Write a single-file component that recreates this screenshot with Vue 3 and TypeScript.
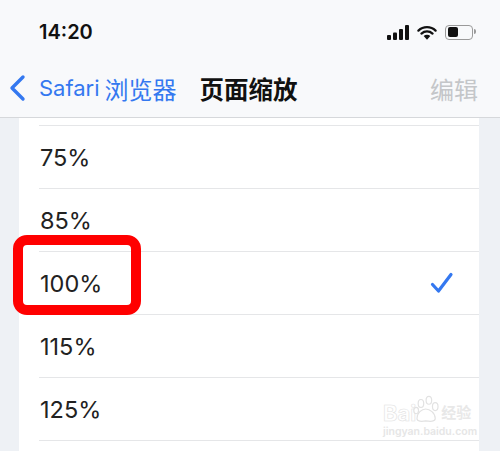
<script setup lang="ts">
const levels = [
  { label: "75%", active: false },
  { label: "85%", active: false },
  { label: "100%", active: true },
  { label: "115%", active: false },
  { label: "125%", active: false },
];
</script>

<template>
  <main class="screen">
    <header class="head">
      <div class="status">
        <span class="status__time">14:20</span>
        <div class="status__icons">
          <svg width="22" height="15" viewBox="0 0 22 15">
            <rect x="0" y="10" width="4" height="5" rx="1" />
            <rect x="6" y="7.5" width="4" height="7.5" rx="1" />
            <rect x="12" y="4" width="4" height="11" rx="1" />
            <rect x="18" y="0" width="4" height="15" rx="1" />
          </svg>
          <svg width="20" height="15" viewBox="0 0 21 15">
            <path d="M1.5 5.5a13 13 0 0 1 18 0M4.7 8.6a8.5 8.5 0 0 1 11.6 0" fill="none" stroke="#111" stroke-width="2.4" stroke-linecap="round" />
            <path d="M7 11.2a5 5 0 0 1 7 0L10.5 15z" />
          </svg>
          <div class="battery">
            <div class="battery__level"></div>
          </div>
        </div>
      </div>
      <nav class="nav">
        <div class="nav__back">
          <svg width="18" height="28" viewBox="0 0 18 28">
            <path d="M15 3 4 14l11 11" fill="none" stroke="#3478f0" stroke-width="3.4" stroke-linecap="round" stroke-linejoin="round" />
          </svg>
          <span class="nav__safari">Safari</span>
          <span>浏览器</span>
        </div>
        <span class="nav__title">页面缩放</span>
        <span class="nav__edit">编辑</span>
      </nav>
    </header>

    <section class="list">
      <div v-for="level in levels" :key="level.label" class="row">
        <span>{{ level.label }}</span>
        <svg v-if="level.active" class="row__check" width="24" height="22" viewBox="0 0 24 22">
          <path d="M2.5 12.5 8.5 19 21 2.5" fill="none" stroke="#3478f0" stroke-width="3.2" stroke-linecap="round" stroke-linejoin="round" />
        </svg>
      </div>
      <div class="row row--end"></div>
    </section>

    <div class="mark"></div>

    <div class="stamp">
      <div class="stamp__logo">
        <span>Bai</span>
        <svg width="27" height="36" viewBox="0 0 34 36">
          <g fill="#fff" stroke="#e2e2e2" stroke-width="1.5">
            <ellipse cx="10" cy="11" rx="3.5" ry="5" />
            <ellipse cx="20" cy="7" rx="3.5" ry="5" />
            <ellipse cx="28" cy="15" rx="3.5" ry="5" />
            <ellipse cx="4" cy="20" rx="3" ry="4" />
            <path d="M5 30c0-7 6-12 11-12s12 5 12 12c0 4-6 4-12 3-5 1-11 1-11-3z" />
          </g>
        </svg>
        <span class="stamp__cn">经验</span>
      </div>
      <div class="stamp__url">jingyan.baidu.com</div>
    </div>
  </main>
</template>

<style scoped>
.screen {
  position: relative;
  width: 500px;
  height: 451px;
  overflow: hidden;
  background: #eef1f5;
  font-family: Inter, "Noto Sans CJK SC", sans-serif;
}
.head {
  height: 118px;
  box-sizing: border-box;
  background: #f8f9fb;
  border-bottom: 1px solid #d6d8db;
}
.status {
  display: flex;
  justify-content: space-between;
  align-items: center;
  height: 24px;
  padding: 20px 27px 0 39px;
}
.status__time {
  font-size: 20px;
  font-weight: 600;
  color: #111;
}
.status__icons {
  display: flex;
  align-items: center;
  gap: 8px;
}
.status__icons svg {
  fill: #111;
}
.battery {
  position: relative;
  width: 28px;
  height: 15px;
  box-sizing: border-box;
  padding: 1.5px;
  border: 1.5px solid #9a9a9a;
  border-radius: 4px;
}
.battery::after {
  content: "";
  position: absolute;
  right: -4px;
  top: 3px;
  width: 2px;
  height: 5px;
  background: #9a9a9a;
  border-radius: 0 2px 2px 0;
}
.battery__level {
  width: 10px;
  height: 100%;
  background: #111;
  border-radius: 2px;
}
.nav {
  display: grid;
  grid-template-columns: 1fr auto 1fr;
  align-items: center;
  height: 40px;
  margin-top: 24px;
  padding: 0 22px 0 8px;
}
.nav__back {
  display: flex;
  align-items: center;
  font-size: 24px;
  color: #3478f0;
  white-space: nowrap;
}
.nav__back svg {
  margin-right: 13px;
}
.nav__safari {
  font-size: 22px;
  margin-right: 5px;
}
.nav__title {
  font-size: 24.5px;
  font-weight: 600;
  color: #111;
  padding-left: 11px;
}
.nav__edit {
  justify-self: end;
  font-size: 24px;
  color: #c4c6c9;
}
.list {
  margin: 0 21px 0 19px;
  height: 333px;
  padding: 7px 0 0 20px;
  box-sizing: border-box;
  background: #fff;
}
.row {
  display: flex;
  justify-content: space-between;
  align-items: center;
  height: 63px;
  box-sizing: border-box;
  padding: 0 20px 0 1px;
  border-top: 1px solid #e5e6e8;
  font-size: 23.5px;
  color: #222;
}
.row--end {
  height: 10px;
}
.row__check {
  margin-right: 5px;
}
.mark {
  position: absolute;
  left: 13px;
  top: 235px;
  width: 128px;
  height: 80px;
  box-sizing: border-box;
  border: 10px solid #f00;
  border-radius: 14px;
}
.stamp {
  position: absolute;
  left: 383px;
  top: 396px;
  width: 100px;
  color: #fff;
  -webkit-text-stroke: 0.6px #e2e2e2;
}
.stamp__logo {
  display: flex;
  align-items: flex-end;
  font-size: 22px;
  font-weight: 700;
  line-height: 22px;
  height: 28px;
}
.stamp__logo svg {
  margin: 0 0 -3px -3px;
  flex: none;
}
.stamp__cn {
  margin-left: 1px;
  font-size: 15px;
  white-space: nowrap;
  color: #e8e8e8;
  -webkit-text-stroke: 0;
}
.stamp__url {
  font-size: 10.5px;
  font-weight: 600;
  line-height: 16px;
  white-space: nowrap;
  color: #e6e6e6;
  -webkit-text-stroke: 0;
}
</style>
